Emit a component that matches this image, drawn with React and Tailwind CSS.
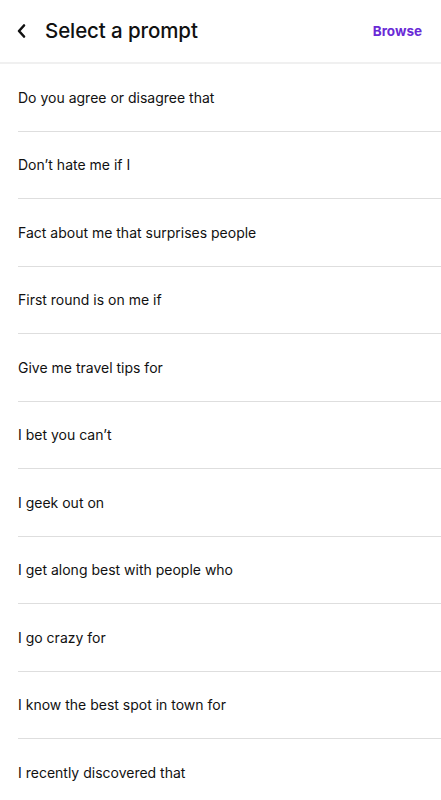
import React from "react";

const prompts = [
  "Do you agree or disagree that",
  "Don’t hate me if I",
  "Fact about me that surprises people",
  "First round is on me if",
  "Give me travel tips for",
  "I bet you can’t",
  "I geek out on",
  "I get along best with people who",
  "I go crazy for",
  "I know the best spot in town for",
  "I recently discovered that",
];

const App = () => {
  return (
    <div className="min-h-screen bg-white text-[#111]" style={{ fontFamily: "Inter, 'Noto Sans', sans-serif" }}>
      {/* Header */}
      <div className="h-[64px] flex items-center justify-between pl-[15px] pr-[19px] border-b-2 border-[#f0f0f0]">
        <div className="flex items-center">
          <svg width="14" height="16" viewBox="0 0 14 16" fill="none" stroke="#111" strokeWidth="2.6" strokeLinecap="round" strokeLinejoin="round">
            <path d="M9 2.5 L4 8 L9 13.5" />
          </svg>
          <h1 className="ml-[16px] text-[20.5px] font-medium tracking-[-0.1px]">Select a prompt</h1>
        </div>
        <button className="text-[13.5px] font-bold text-[#6a2ad6]">Browse</button>
      </div>

      {/* Prompt list */}
      <div className="pl-[18px]">
        {prompts.map((p) => (
          <div key={p} className="h-[67.5px] flex items-center border-b border-[#dedede] text-[14px]">
            {p}
          </div>
        ))}
      </div>
    </div>
  );
};

export default App;
